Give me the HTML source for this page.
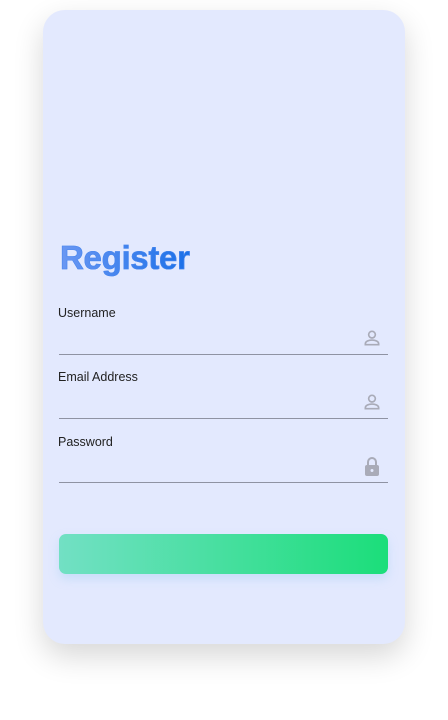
<!DOCTYPE html>
<html><head><style>
body{margin:0;width:448px;height:720px;background:#fff;position:relative;overflow:hidden;font-family:"Liberation Sans",sans-serif}
.card{position:absolute;left:43px;top:10px;width:362px;height:634px;border-radius:22px;background:#e3e9fe;box-shadow:0 12px 30px rgba(0,0,0,0.16)}
h1{position:absolute;left:60px;top:239px;margin:0;font-size:33px;font-weight:bold;letter-spacing:-0.3px;-webkit-text-stroke:0.6px #4b88ee;background:linear-gradient(90deg,#6a97f3,#1a70e8);-webkit-background-clip:text;background-clip:text;color:transparent}
.lbl{position:absolute;left:58px;font-size:12.5px;color:#222}
.line{position:absolute;left:59px;width:329px;height:1px;background:#8f93a3}
.ic{position:absolute;left:362px}
.btn{position:absolute;left:59px;top:534px;width:329px;height:40px;border-radius:7px;background:linear-gradient(90deg,#72e0c4,#1bde7a);box-shadow:0 5px 10px rgba(150,200,240,0.35)}
</style></head><body>
<div class="card"></div>
<h1>Register</h1>
<div class="lbl" style="top:306px">Username</div>
<svg class="ic" style="top:328px" width="20" height="20" viewBox="0 0 24 24"><circle cx="12" cy="8" r="4" fill="none" stroke="#a9abb8" stroke-width="2"/><path d="M4 20v-1c0-3 4-4.5 8-4.5s8 1.5 8 4.5v1z" fill="none" stroke="#a9abb8" stroke-width="2"/></svg>
<div class="line" style="top:354px"></div>
<div class="lbl" style="top:370px">Email Address</div>
<svg class="ic" style="top:392px" width="20" height="20" viewBox="0 0 24 24"><circle cx="12" cy="8" r="4" fill="none" stroke="#a9abb8" stroke-width="2"/><path d="M4 20v-1c0-3 4-4.5 8-4.5s8 1.5 8 4.5v1z" fill="none" stroke="#a9abb8" stroke-width="2"/></svg>
<div class="line" style="top:418px"></div>
<div class="lbl" style="top:435px">Password</div>
<svg class="ic" style="top:455px" width="20" height="22" viewBox="0 0 20 22"><path d="M6 10V7a4 4 0 0 1 8 0v3" fill="none" stroke="#a9abb8" stroke-width="2"/><rect x="3" y="10" width="14" height="11" rx="2" fill="#a9abb8"/><circle cx="10" cy="15.5" r="1.5" fill="#e3e9fe"/></svg>
<div class="line" style="top:482px"></div>
<div class="btn"></div>
</body></html>
